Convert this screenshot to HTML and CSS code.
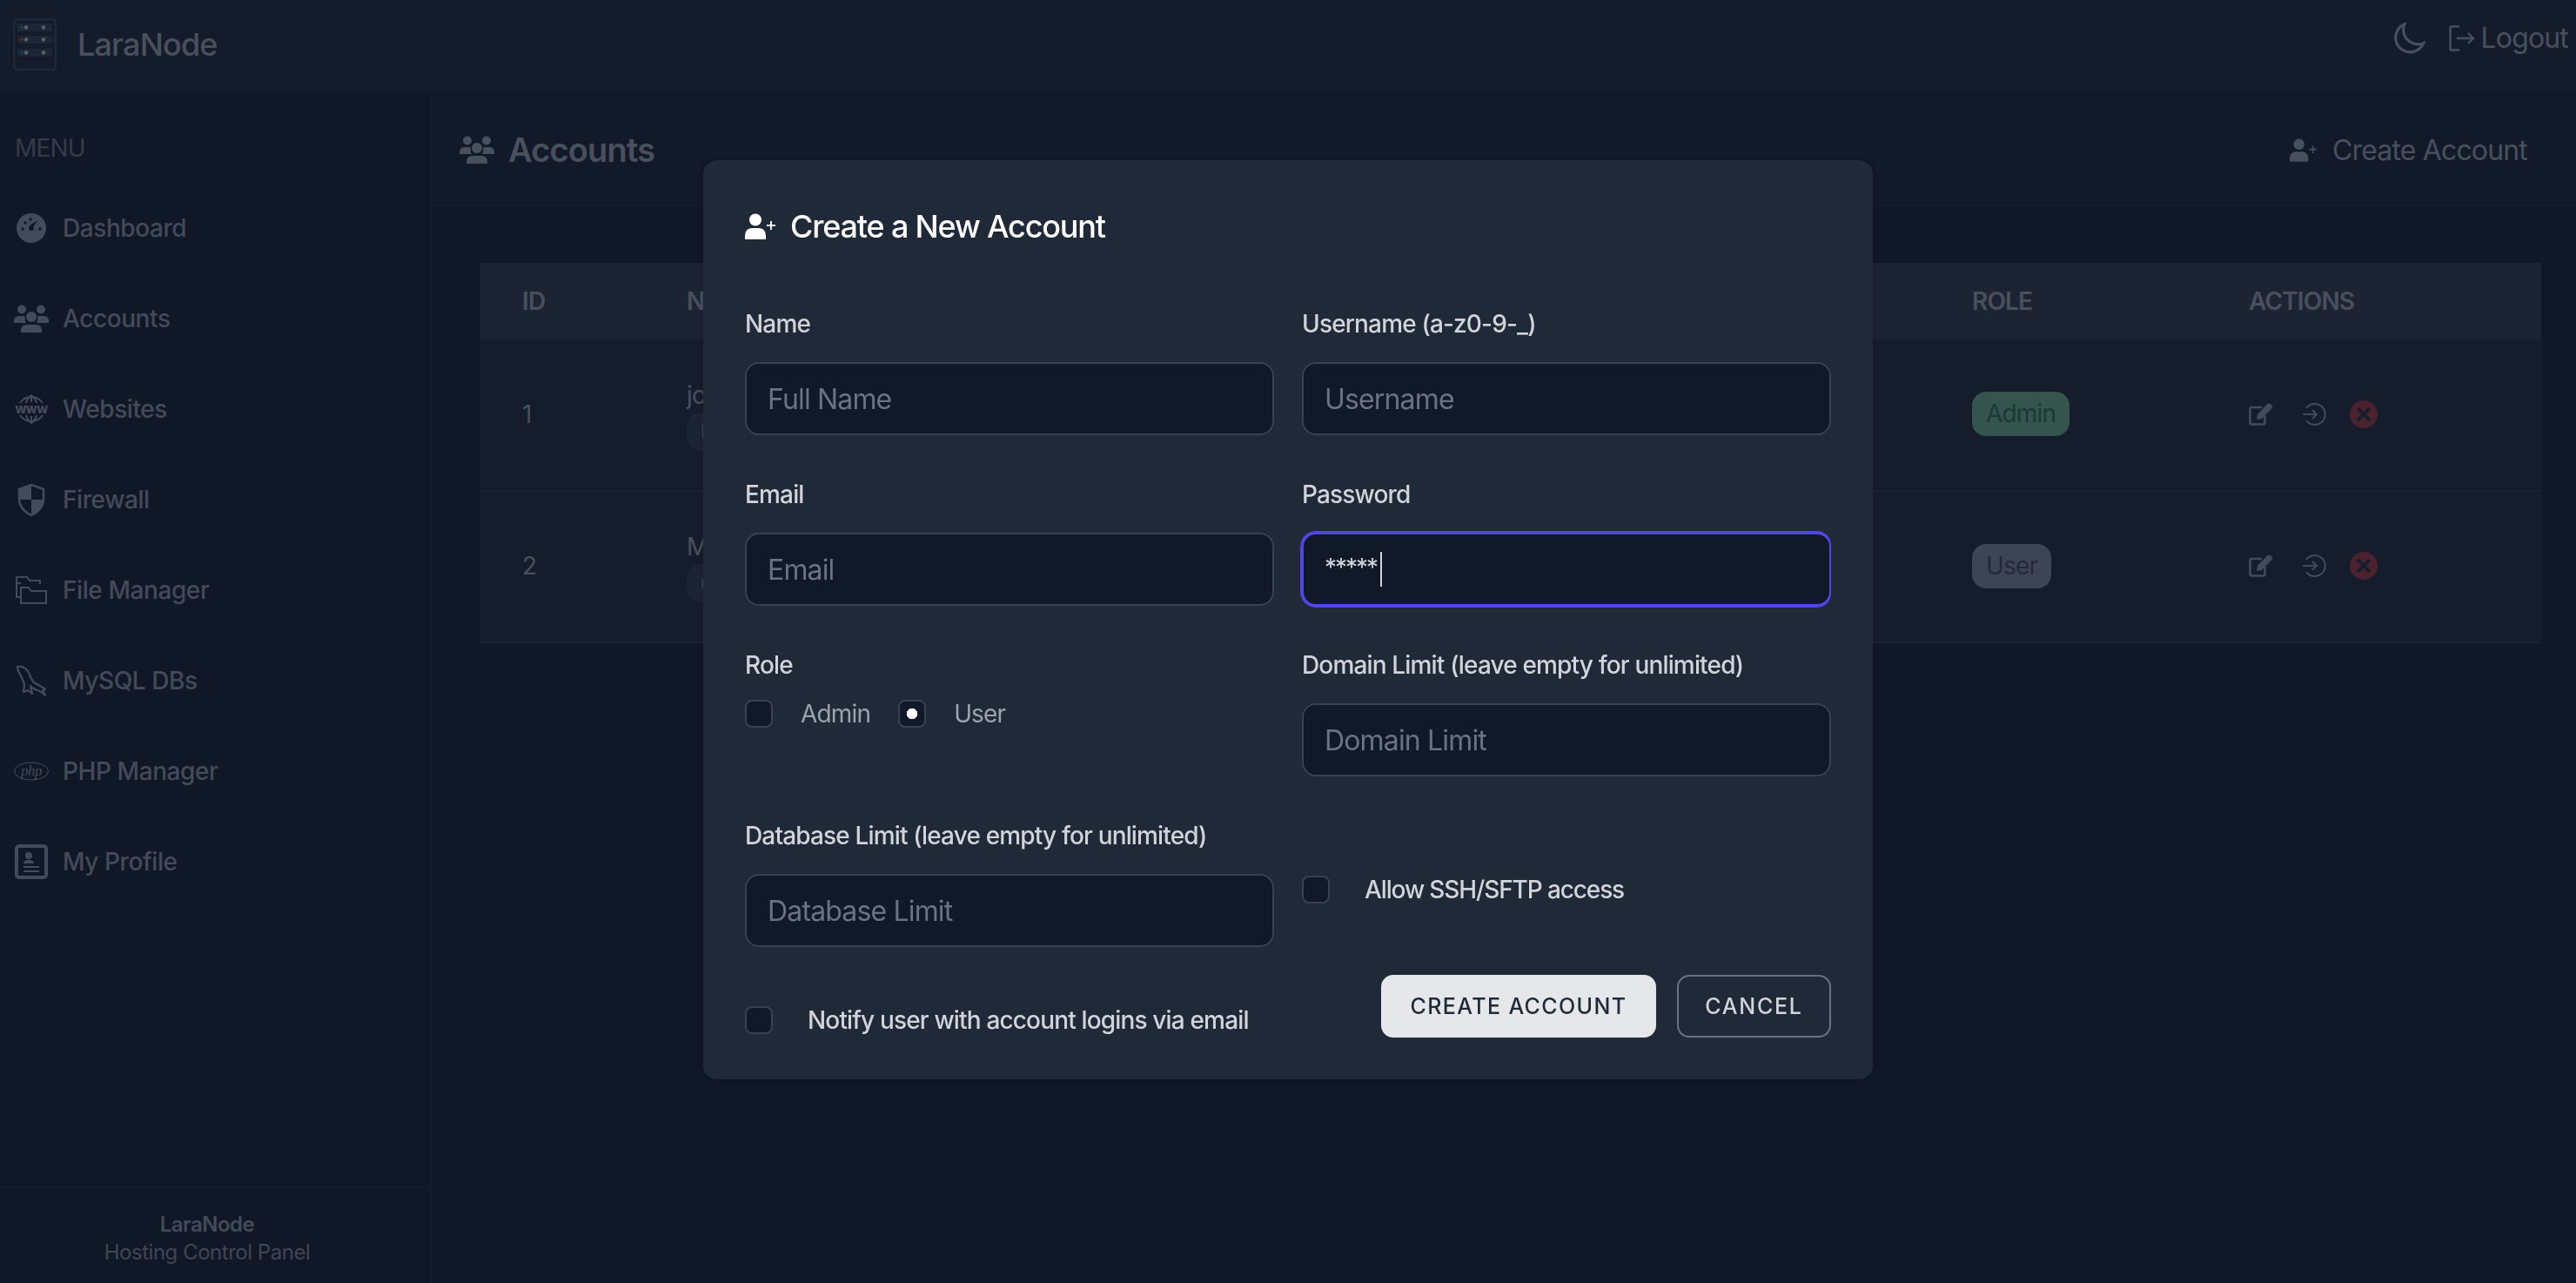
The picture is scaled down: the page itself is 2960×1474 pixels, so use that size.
FILE: index.html
```html
<!DOCTYPE html>
<html lang="en">
<head>
<meta charset="utf-8">
<title>LaraNode - Accounts</title>
<link rel="stylesheet" href="styles.css">
</head>
<body>
<svg class="sprite" aria-hidden="true">
  <symbol id="i-users" viewBox="0 0 40 32"><circle cx="9" cy="5.5" r="5"/><circle cx="31" cy="5.5" r="5"/><circle cx="20" cy="14" r="6"/><path d="M0 21v-2q0-6 6-6h5q1 0 2 1-1 5 1 7zM40 21v-2q0-6-6-6h-5q-1 0-2 1 1 5-1 7zM8 32v-2q0-7 7-7h10q7 0 7 7v2z"/></symbol>
  <symbol id="i-userplus" viewBox="0 0 36 30"><circle cx="12" cy="7.5" r="7"/><path d="M0 30v-4q0-9 9-9h6q9 0 9 9v4z"/><path d="M30 9v10M25 14h10" fill="none" stroke="currentColor" stroke-width="1.8"/></symbol>
  <symbol id="i-edit" viewBox="0 0 28 26"><path d="M15 5H3.500a2 2 0 0 0-2 2v15.500a2 2 0 0 0 2 2h13a2 2 0 0 0 2-2V14" fill="none" stroke="currentColor" stroke-width="2.600"/><path d="M9 19l1-6L21 1.500q2-2 4.500 0t1 4.500L15 18z"/></symbol>
  <symbol id="i-login" viewBox="0 0 28 26"><path d="M5 6a12 12 0 1 1 0 14" fill="none" stroke="currentColor" stroke-width="2"/><path d="M1 13h16M12 8l5 5-5 5" fill="none" stroke="currentColor" stroke-width="2"/></symbol>
  <symbol id="i-del" viewBox="0 0 32 32"><circle cx="16" cy="16" r="16" class="del-bg"/><path d="M10 10l12 12M22 10L10 22" fill="none" class="del-x" stroke-width="4" stroke-linecap="round"/></symbol>
</svg>

<div class="app">
  <header class="topbar">
    <div class="brand">
      <svg class="logo" viewBox="0 0 50 60">
        <rect x="1" y="1" width="48" height="58" rx="5" class="logo-frame"/>
        <rect x="5" y="6" width="40" height="9" rx="2" class="logo-row"/>
        <rect x="5" y="20" width="40" height="9" rx="2" class="logo-row"/>
        <rect x="5" y="35" width="40" height="9" rx="2" class="logo-row"/>
        <circle cx="10" cy="10.500" r="1.500" class="led-green"/><circle cx="15" cy="10.500" r="2.200" class="led"/><circle cx="35" cy="10.500" r="2.200" class="led"/>
        <circle cx="10" cy="24.500" r="1.500" class="led-red"/><circle cx="15" cy="24.500" r="2.200" class="led"/><circle cx="35" cy="24.500" r="2.200" class="led"/>
        <circle cx="10" cy="39.500" r="1.500" class="led-blue"/><circle cx="15" cy="39.500" r="2.200" class="led"/><circle cx="35" cy="39.500" r="2.200" class="led"/>
      </svg>
      <span class="brand-name">LaraNode</span>
    </div>
    <div class="top-actions">
      <svg class="moon" viewBox="2 1.500 21 20.500"><path d="M21.752 15.002A9.718 9.718 0 0118 15.750c-5.385 0-9.750-4.365-9.750-9.750 0-1.330.266-2.597.748-3.752A9.753 9.753 0 003 11.250C3 16.635 7.365 21 12.750 21a9.753 9.753 0 009.002-5.998z"/></svg>
      <a class="logout">
        <svg class="logout-icon" viewBox="0 0 30 30"><path d="M12 1.500H3a1.500 1.500 0 0 0-1.500 1.500v24A1.500 1.500 0 0 0 3 28.500h9M9 15h19M22 9l6 6-6 6"/></svg>
        <span>Logout</span>
      </a>
    </div>
  </header>

  <div class="body">
    <aside class="sidebar">
      <div class="menu-label">MENU</div>
      <nav class="menu">
        <a class="menu-item">
          <span class="menu-icon"><svg width="34" height="34" viewBox="0 0 34 34"><circle cx="17" cy="17" r="17" fill="currentColor"/><path d="M19 15l6-7-9 5z" class="cut" /><circle cx="17" cy="17" r="3" class="cut"/><circle cx="7" cy="18" r="1.800" class="cut"/><circle cx="10" cy="11" r="1.800" class="cut"/><circle cx="16" cy="7" r="1.800" class="cut"/><circle cx="27" cy="18" r="1.800" class="cut"/></svg></span>
          <span>Dashboard</span>
        </a>
        <a class="menu-item">
          <span class="menu-icon"><svg class="fill" width="40" height="32"><use href="#i-users"/></svg></span>
          <span>Accounts</span>
        </a>
        <a class="menu-item">
          <span class="menu-icon"><svg width="38" height="34" viewBox="0 0 38 34"><path d="M6 10a15.500 15.500 0 0 1 26 0M6 24a15.500 15.500 0 0 0 26 0M13 10q1-5 6-9 5 4 6 9M13 24q1 5 6 9 5-4 6-9M19 1v8M19 25v8" fill="none" stroke="currentColor" stroke-width="2"/><text x="19" y="22" text-anchor="middle" class="www">www</text></svg></span>
          <span>Websites</span>
        </a>
        <a class="menu-item">
          <span class="menu-icon"><svg width="32" height="37" viewBox="0 0 32 37"><path d="M16 1l14 5v11c0 9-6 15-14 19C8 32 2 26 2 17V6z" fill="none" stroke="currentColor" stroke-width="2.500"/><path d="M16 1L2 6v12h14zM16 18v18c8-4 14-10 14-19v1z" fill="currentColor"/></svg></span>
          <span>Firewall</span>
        </a>
        <a class="menu-item">
          <span class="menu-icon"><svg width="36" height="32" viewBox="0 0 36 32" fill="none" stroke="currentColor" stroke-width="2"><path d="M6 24H1V1h12l3 4h12v4"/><path d="M6 31V13h9l3 4h17v14z"/><path d="M1 8h5"/></svg></span>
          <span>File Manager</span>
        </a>
        <a class="menu-item">
          <span class="menu-icon"><svg width="36" height="36" viewBox="0 0 36 36" fill="none" stroke="currentColor" stroke-width="2.200" stroke-linejoin="round"><path d="M2 2c5-1 9 1 12 5 3 5 3 9 7 13 4 3 9 4 13 8l-3 1 3 6-6-5c-5-1-8-3-11-6l2 9-5-4-5 2 1-9C8 17 7 13 4 9 3 7 2 4 2 2z"/></svg></span>
          <span>MySQL DBs</span>
        </a>
        <a class="menu-item">
          <span class="menu-icon"><svg width="40" height="22" viewBox="0 0 40 22"><ellipse cx="20" cy="11" rx="19.500" ry="10" fill="none" stroke="currentColor" stroke-width="1"/><text x="20" y="15.500" text-anchor="middle" class="php">php</text></svg></span>
          <span>PHP Manager</span>
        </a>
        <a class="menu-item">
          <span class="menu-icon"><svg width="38" height="40" viewBox="0 0 38 40"><rect x="2" y="2" width="34" height="36" rx="3" fill="none" stroke="currentColor" stroke-width="4"/><circle cx="16" cy="13" r="4" fill="currentColor"/><path d="M10 22q0-4 6-4t6 4zM10 25h18v2H10zM10 30h18v2H10z" fill="currentColor"/></svg></span>
          <span>My Profile</span>
        </a>
      </nav>
      <footer class="side-footer">
        <div class="side-footer-name">LaraNode</div>
        <div>Hosting Control Panel</div>
      </footer>
    </aside>

    <main class="main">
      <div class="page-head">
        <h1 class="page-title"><svg class="fill" width="40" height="32"><use href="#i-users"/></svg>Accounts</h1>
        <a class="page-action"><svg class="fill" width="32" height="27"><use href="#i-userplus"/></svg>Create Account</a>
      </div>
      <div class="content">
        <table class="table">
          <colgroup><col class="c-id"><col class="c-name"><col class="c-user"><col class="c-mail"><col class="c-role"><col class="c-act"></colgroup>
          <thead><tr><th>ID</th><th>Name</th><th>Username</th><th>Email</th><th>Role</th><th>Actions</th></tr></thead>
          <tbody>
            <tr>
              <td>1</td>
              <td><div class="who">john</div><span class="tag">Domains</span></td>
              <td>john</td><td>john@example.com</td>
              <td><span class="badge badge-admin">Admin</span></td>
              <td><div class="acts"><svg class="fill" width="28" height="26"><use href="#i-edit"/></svg><svg class="fill act-login" width="28" height="26"><use href="#i-login"/></svg><svg width="32" height="32"><use href="#i-del"/></svg></div></td>
            </tr>
            <tr>
              <td>2</td>
              <td><div class="who">Mary</div><span class="tag">user</span></td>
              <td>mary</td><td>mary@example.com</td>
              <td><span class="badge badge-user">User</span></td>
              <td><div class="acts"><svg class="fill" width="28" height="26"><use href="#i-edit"/></svg><svg class="fill act-login" width="28" height="26"><use href="#i-login"/></svg><svg width="32" height="32"><use href="#i-del"/></svg></div></td>
            </tr>
          </tbody>
        </table>
      </div>
    </main>
  </div>
</div>

<div class="overlay">
  <form class="modal">
    <h2 class="modal-title"><svg class="fill" width="36" height="30"><use href="#i-userplus"/></svg>Create a New Account</h2>
    <div class="form-grid">
      <div class="field"><label class="label">Name</label><input class="input" placeholder="Full Name"></div>
      <div class="field"><label class="label">Username (a-z0-9-_)</label><input class="input" placeholder="Username"></div>
      <div class="field"><label class="label">Email</label><input class="input" placeholder="Email"></div>
      <div class="field"><label class="label">Password</label><div class="input input-focus">*****<span class="caret"></span></div></div>
      <div class="field">
        <label class="label">Role</label>
        <div class="radios">
          <label class="radio"><input class="check" type="radio" name="role"><span>Admin</span></label>
          <label class="radio"><input class="check" type="radio" name="role" checked><span>User</span></label>
        </div>
      </div>
      <div class="field"><label class="label">Domain Limit (leave empty for unlimited)</label><input class="input" placeholder="Domain Limit"></div>
      <div class="field"><label class="label">Database Limit (leave empty for unlimited)</label><input class="input" placeholder="Database Limit"></div>
      <label class="option option-ssh"><input class="check" type="checkbox"><span>Allow SSH/SFTP access</span></label>
    </div>
    <div class="modal-foot">
      <label class="option"><input class="check" type="checkbox"><span>Notify user with account logins via email</span></label>
      <div class="buttons">
        <button type="button" class="btn btn-primary">Create Account</button>
        <button type="button" class="btn btn-ghost">Cancel</button>
      </div>
    </div>
  </form>
</div>
</body>
</html>
```

FILE: styles.css
```css
* { box-sizing: border-box; }
html, body { margin: 0; height: 100%; overflow: hidden; }
body { background: #111827; color: #d1d5db; font-family: Inter, "Liberation Sans", sans-serif; letter-spacing: -0.03em; font-size: 28px; }
.sprite { width: 0; height: 0; position: absolute; }
.fill { fill: currentColor; }
.app { height: 1474px; display: flex; flex-direction: column; }

.topbar { height: 106px; flex: none; display: flex; align-items: center; justify-content: space-between; padding: 0 9px 4px 15px; background: #1a2433; }
.brand { display: flex; align-items: center; gap: 24px; }
.logo { width: 50px; height: 60px; }
.logo-frame { fill: none; stroke: #32445a; stroke-width: 2.5; }
.logo-row { fill: #2d3c4d; }
.led { fill: #c8d0dc; }
.led-green { fill: #22c55e; }
.led-red { fill: #ef4444; }
.led-blue { fill: #3b82f6; }
.brand-name { font-size: 36px; font-weight: 500; color: #9ca3af; }
.top-actions { align-self: flex-start; margin-top: 24px; display: flex; align-items: center; gap: 27px; }
.moon { width: 36px; height: 36px; fill: none; stroke: #9ca3af; stroke-width: 1.800; }
.logout { display: flex; align-items: center; gap: 7px; font-size: 32px; color: #9ca3af; }
.logout-icon { width: 30px; height: 30px; fill: none; stroke: #9ca3af; stroke-width: 2.400; }

.body { flex: 1; display: flex; min-height: 0; }
.sidebar { width: 496px; flex: none; display: flex; flex-direction: column; padding-top: 44px; border-right: 2px solid #19222f; background: #111827; }
.menu-label { padding-left: 17px; line-height: 40px; margin-bottom: 20px; color: #6b7280; font-size: 28px; }
.menu { display: flex; flex-direction: column; }
.menu-item { height: 104px; display: flex; align-items: center; gap: 16px; padding-left: 16px; color: #8f97a6; font-size: 28px; font-weight: 500; letter-spacing: -0.015em; }
.menu-icon { width: 40px; display: flex; justify-content: center; color: #8f97a6; }
.cut { fill: #111827; }
.www { font-size: 15px; font-weight: 800; fill: #8f97a6; letter-spacing: -0.6px; }
.php { font-size: 17px; font-style: italic; fill: #8f97a6; font-family: "Liberation Serif", serif; }
.side-footer { margin-top: auto; border-top: 2px solid #19222f; padding: 26px 18px 19px 0; text-align: center; font-size: 24px; line-height: 32px; letter-spacing: -0.02em; color: #858c9b; }
.side-footer-name { font-weight: 600; color: #8f97a6; }

.main { flex: 1; min-width: 0; display: flex; flex-direction: column; background: #111827; }
.page-head { height: 131px; display: flex; align-items: center; justify-content: space-between; padding: 3px 56px 0 32px; background: #141d2d; border-bottom: 2px solid #19222f; }
.page-title { margin: 0; display: flex; align-items: center; gap: 16px; font-size: 38px; font-weight: 600; color: #9ca3af; }
.page-action { display: flex; align-items: center; gap: 17px; font-size: 32px; color: #9ca3af; }
.content { padding: 65px 40px 0 56px; }
.table { width: 100%; table-layout: fixed; border-collapse: collapse; }
.c-id { width: 189px; }
.c-name { width: 400px; }
.c-user { width: 619px; }
.c-role { width: 318px; }
.c-act { width: 384px; }
.table th { height: 88px; padding: 0 0 0 48px; text-align: left; text-transform: uppercase; font-size: 28px; font-weight: 600; color: #9ca3af; background: #2d3746; }
.table td { height: 174px; padding: 0 0 2px 48px; font-size: 28px; color: #9ca3af; background: #1c2636; border-bottom: 2px solid #2a3443; }
.who { line-height: 40px; }
.tag { display: inline-block; padding: 4px 16px; line-height: 36px; border-radius: 16px; background: #2d3746; font-size: 24px; }
.badge { display: inline-block; height: 51px; line-height: 51px; padding: 0 16px; border-radius: 16px; font-size: 28px; }
.badge-admin { background: #6bb088; color: #2d6a4a; }
.badge-user { background: #7f8796; color: #3e4657; }
.acts { display: flex; align-items: center; gap: 27px; color: #8f97a6; }
.act-login { margin-left: 6px; }
.del-bg { fill: #a8343e; }
.del-x { stroke: #1f2937; }

.overlay { position: fixed; inset: 0; background: rgba(17, 24, 39, 0.6); display: flex; justify-content: center; align-items: flex-start; padding-top: 184px; }
.modal { width: 1344px; height: 1056px; padding: 48px; background: #1f2937; border-radius: 16px; box-shadow: 0 0 6px rgba(0, 0, 0, 0.2); display: flex; flex-direction: column; }
.modal-title { margin: 0 0 64px; display: flex; align-items: center; gap: 16px; height: 56px; font-size: 36px; font-weight: 500; letter-spacing: -0.033em; color: #fff; }
.form-grid { display: grid; grid-template-columns: 1fr 1fr; column-gap: 32px; row-gap: 48px; }
.field { display: flex; flex-direction: column; }
.label { line-height: 40px; margin-bottom: 24px; font-size: 28px; font-weight: 500; color: #d1d5db; }
.input { display: block; width: 100%; height: 84px; padding: 0 24px; background: #111827; border: 2px solid #374151; border-radius: 16px; font: inherit; font-size: 32px; letter-spacing: inherit; color: #d1d5db; outline: none; }
.input::placeholder { color: #6b7280; opacity: 1; }
.input-focus { display: flex; align-items: center; padding-bottom: 4px; border-color: #4f46e5; box-shadow: 0 0 0 2px #4f46e5; clip-path: inset(-2px 0 -2px -2px round 18px 16px 16px 18px); font-size: 28px; letter-spacing: -2px; }
.caret { width: 2px; height: 40px; margin-left: 4px; margin-top: 4px; background: #d1d5db; }
.radios { display: flex; gap: 32px; margin-top: -8px; }
.radio { display: flex; align-items: center; gap: 32px; line-height: 40px; font-size: 28px; color: #9ca3af; }
.check { appearance: none; width: 32px; height: 32px; margin: 0; flex: none; background: #111827; border: 2px solid #374151; border-radius: 8px; }
.check:checked { background-image: radial-gradient(circle, #fff 0 6px, transparent 6.5px); }
.option { display: flex; align-items: center; gap: 40px; line-height: 40px; font-size: 28px; font-weight: 500; color: #d1d5db; }
.option-ssh { align-self: center; margin-top: 16px; letter-spacing: -0.04em; }
.modal-foot { margin-top: 32px; display: flex; justify-content: space-between; align-items: flex-end; }
.buttons { display: flex; gap: 24px; }
.btn { height: 72px; padding: 0; border-radius: 14px; font: inherit; font-size: 25px; font-weight: 500; letter-spacing: 0.07em; text-transform: uppercase; white-space: nowrap; }
.btn-primary { width: 316px; background: #e5e7eb; border: 2px solid #e5e7eb; color: #1f2937; letter-spacing: 0.055em; }
.btn-ghost { width: 177px; background: transparent; border: 2px solid #6b7280; color: #d1d5db; }
```
